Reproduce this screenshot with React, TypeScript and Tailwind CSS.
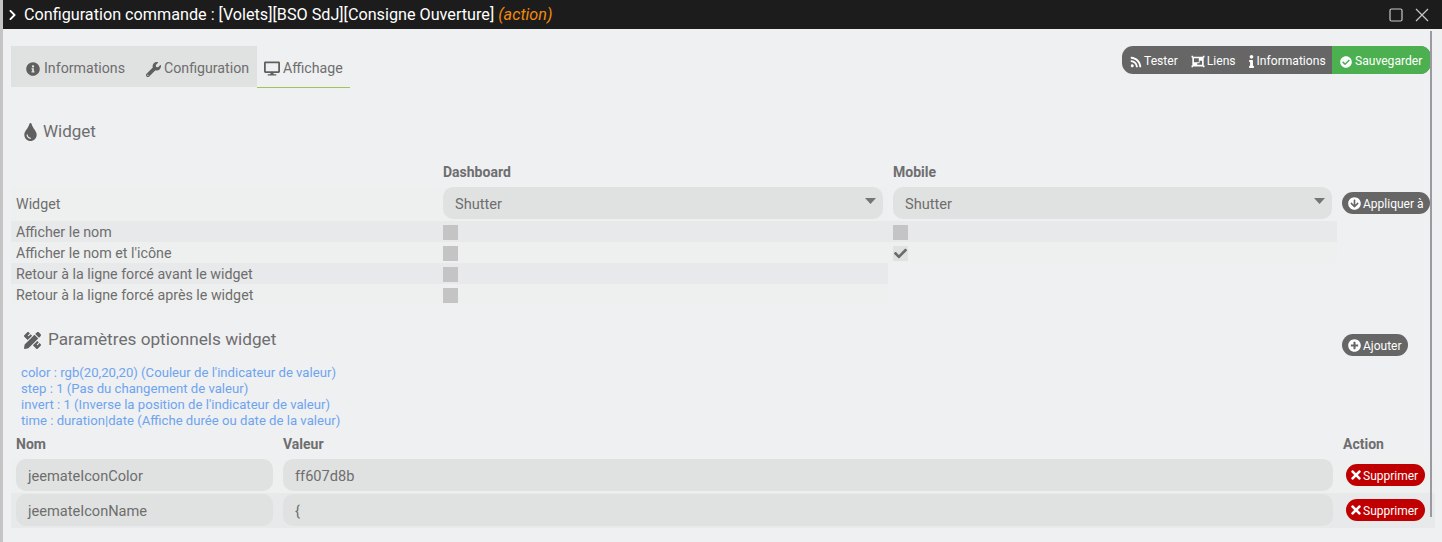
import React from "react";
import {
  FaChevronRight, FaInfoCircle, FaWrench, FaDesktop, FaTint, FaRss, FaObjectGroup, FaInfo,
  FaCheckCircle, FaArrowCircleDown, FaPlusCircle, FaTimes, FaCheck, FaPencilRuler,
} from "react-icons/fa";

function Pill({ icon, children, className = "" }: { icon: React.ReactNode; children: React.ReactNode; className?: string }) {
  return (
    <div className={`flex items-center rounded-[11px] h-[22px] text-white text-[12px] gap-[2px] ${className}`}>
      {icon}
      <span className="pt-[2px]">{children}</span>
    </div>
  );
}

function Select() {
  return (
    <div className="relative flex-1 h-[32px] rounded-[10px] bg-[#e0e2e1] flex items-center pl-[12px] pt-[4px] text-[14.6px] text-[#6e6e6e]">
      Shutter
      <svg className="absolute right-[7px] top-[11px]" width="11" height="6" viewBox="0 0 11 6" fill="#757575"><path d="M0 0h11L5.5 6z" /></svg>
    </div>
  );
}

function Check({ checked }: { checked?: boolean }) {
  return checked ? (
    <div className="w-[15px] h-[15px] bg-[#e0e2e1] flex items-center justify-center">
      <FaCheck className="w-[15px] h-[13px] shrink-0 text-[#6b6b6b]" />
    </div>
  ) : (
    <div className="w-[15px] h-[15px] bg-[#c4c4c4]" />
  );
}

function OptRow({ label, dark, mobile, checked }: { label: string; dark: boolean; mobile: boolean; checked?: boolean }) {
  return (
    <div className={`flex items-center h-[21px] pt-[2px] text-[14.25px] text-[#6e6e6e] ${mobile ? "w-[1326px]" : "w-[877px]"} ${dark ? "bg-[#e8e9ea]" : "bg-[#eef0ef]"}`}>
      <div className="w-[432px] shrink-0 pl-[5px]">{label}</div>
      <div className={`${mobile ? "w-[450px]" : "w-[445px]"} shrink-0 flex items-center`}><Check /></div>
      {mobile && <div className="flex items-center"><Check checked={checked} /></div>}
    </div>
  );
}

function ParamRow({ name, value, dark }: { name: string; value: string; dark: boolean }) {
  return (
    <div className={`flex w-[1424px] pl-[5px] text-[14.6px] text-[#6e6e6e] ${dark ? "h-[35px] pt-[1px] bg-[#e8e9ea]" : "h-[34px] bg-[#eef0ef]"}`}>
      <div className="w-[257px] h-[32px] rounded-[10px] bg-[#e0e2e1] flex items-center pl-[12px] pt-[4px]">{name}</div>
      <div className="w-[1050px] h-[32px] ml-[10px] rounded-[10px] bg-[#e0e2e1] flex items-center pl-[12px] pt-[4px]">{value}</div>
      <div className="ml-[13px] mt-[5px] w-[79px] h-[22px] rounded-[11px] bg-[#c00000] text-white text-[12px] flex items-center pl-[5px] gap-[2px]">
        <FaTimes className="w-[10px] h-[14px]" />
        <span className="pt-[2px]">Supprimer</span>
      </div>
    </div>
  );
}

export default function App() {
  return (
    <div className="relative w-[1442px] h-[542px] overflow-hidden bg-[#eff0f2] text-[#5f5f5f] font-['Roboto',sans-serif] border-l-[3px] border-[#c4c4c4]">
      <div className="flex items-center h-[29px] bg-[#1c1c1c] text-white text-[16.2px]">
        <FaChevronRight className="ml-[4px] w-[11px] h-[12px]" />
        <span className="ml-[6px] pt-[2px]">Configuration commande : [Volets][BSO SdJ][Consigne Ouverture]</span>
        <span className="ml-[4px] pt-[2px] italic text-[#f08a0e]">(action)</span>
        <div className="ml-auto flex items-center gap-[12px] pr-[13px]">
          <svg width="14" height="14" viewBox="0 0 14 14" fill="none" stroke="#c8c8c8" strokeWidth="1.2"><rect x="1" y="1" width="12" height="12" rx="1.5" /></svg>
          <svg width="14" height="14" viewBox="0 0 14 14" fill="none" stroke="#c8c8c8" strokeWidth="1.2"><path d="M1 1 L13 13 M13 1 L1 13" /></svg>
        </div>
      </div>

      <div className="pl-[8px] pt-[17px]">
        <div className="flex justify-between items-start w-[1420px]">
          <div className="flex h-[42px] text-[14.2px]">
            <div className="flex items-center h-[41px] w-[246px] bg-[#e0e2e1] pl-[15px] pt-[5px]">
              <FaInfoCircle className="w-[14px] h-[14px] mr-[4px]" />
              <span className="text-[#6e6e6e]">Informations</span>
              <FaWrench className="ml-[21px] mr-[3px] w-[15px] h-[15px]" />
              <span className="text-[#6e6e6e]">Configuration</span>
            </div>
            <div className="flex items-center w-[93px] h-[42px] border-b border-[#a3c35a] pl-[7px] pt-[4px]">
              <FaDesktop className="w-[16px] h-[15px] mr-[3px]" />
              <span className="text-[#6e6e6e]">Affichage</span>
            </div>
          </div>
          <div className="flex h-[28px] rounded-[11px] overflow-hidden text-white text-[12.1px] bg-[#666666]">
            <div className="flex items-center pl-[8px] w-[210px] pt-[3px]">
              <FaRss className="w-[12px] h-[12px] mr-[2px]" /><span>Tester</span>
              <FaObjectGroup className="ml-[13px] mr-[2px] w-[14px] h-[13px]" /><span>Liens</span>
              <FaInfo className="ml-[13px] mr-[3px] w-[5px] h-[13px]" /><span>Informations</span>
            </div>
            <div className="flex items-center bg-[#4caf50] w-[99px] pl-[8px] pt-[3px]">
              <FaCheckCircle className="w-[12px] h-[12px] mr-[3px]" /><span>Sauvegarder</span>
            </div>
          </div>
        </div>

        <div className="flex items-center h-[24px] mt-[32px] pl-[13px] text-[17px] text-[#6e6e6e]">
          <FaTint className="w-[13px] h-[18px] text-[#5f5f5f] mr-[6px]" />
          Widget
        </div>

        <div className="flex h-[25px] mt-[18px] text-[14px] font-bold text-[#6e6e6e] items-start">
          <div className="w-[432px]" />
          <div className="w-[450px]">Dashboard</div>
          <div>Mobile</div>
        </div>

        <div className="flex items-start h-[34px] w-[1420px]">
          <div className="flex w-[877px] h-[34px] bg-[#eef0ef]">
            <div className="w-[432px] pl-[5px] pt-[7px] text-[14.25px] text-[#6e6e6e]">Widget</div>
            <Select />
            <div className="w-[5px]" />
          </div>
          <div className="flex w-[439px] ml-[5px]"><Select /></div>
          <Pill className="bg-[#666666] ml-[10px] mt-[5px] w-[88px] pl-[6px]" icon={<FaArrowCircleDown className="w-[13px] h-[13px]" />}>Appliquer à</Pill>
        </div>

        <OptRow label="Afficher le nom" dark mobile />
        <OptRow label="Afficher le nom et l'icône" dark={false} mobile checked />
        <OptRow label="Retour à la ligne forcé avant le widget" dark mobile={false} />
        <OptRow label="Retour à la ligne forcé après le widget" dark={false} mobile={false} />

        <div className="flex items-center h-[24px] mt-[23px] w-[1420px] pl-[13px] text-[17.2px] text-[#6e6e6e]">
          <FaPencilRuler className="w-[17px] h-[17px] text-[#5f5f5f] mr-[7px]" />
          <span>Paramètres optionnels widget</span>
          <Pill className="bg-[#666666] ml-auto mr-[23px] w-[66px] pl-[6px] mt-[10px]" icon={<FaPlusCircle className="w-[13px] h-[13px]" />}>Ajouter</Pill>
        </div>

        <div className="mt-[13px] pl-[10px] text-[13.15px] leading-[16px] text-[#6ea4ee]">
          <div>color : rgb(20,20,20) (Couleur de l'indicateur de valeur)</div>
          <div>step : 1 (Pas du changement de valeur)</div>
          <div>invert : 1 (Inverse la position de l'indicateur de valeur)</div>
          <div>time : duration|date (Affiche durée ou date de la valeur)</div>
        </div>

        <div className="flex h-[20px] mt-[5px] items-center text-[14px] font-bold text-[#6e6e6e]">
          <div className="w-[272px] pl-[5px]">Nom</div>
          <div className="w-[1060px]">Valeur</div>
          <div>Action</div>
        </div>

        <div className="mt-[5px]">
          <ParamRow name="jeemateIconColor" value="ff607d8b" dark={false} />
          <ParamRow name="jeemateIconName" value="{" dark />
        </div>
      </div>

      <div className="absolute left-[1427px] top-[31px] w-[2px] h-[486px] bg-[#9a9aa0]" />
    </div>
  );
}
